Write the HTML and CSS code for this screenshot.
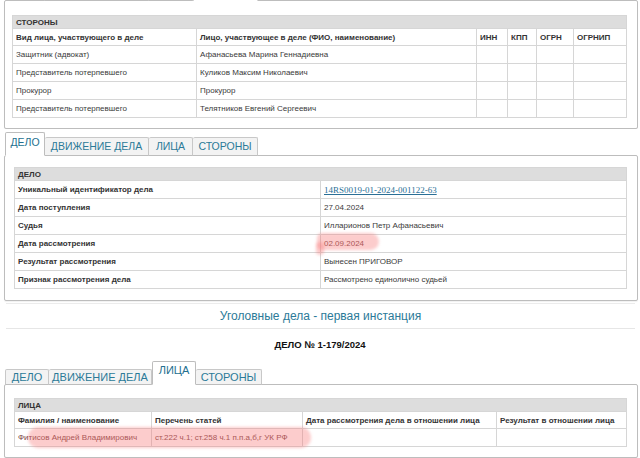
FILE: index.html
```html
<!DOCTYPE html>
<html lang="ru">
<head>
<meta charset="utf-8">
<title>Уголовные дела</title>
<link rel="stylesheet" href="styles.css">
</head>
<body>
<div class="clip">
  <div class="widget">
    <div class="tabs">
      <div class="tab t-delo"></div>
      <div class="tab t-move"></div>
      <div class="tab t-lica"></div>
      <div class="tab t-stor active"></div>
    </div>
    <div class="panel p1">
      <table class="grid">
        <colgroup><col class="c1"><col class="c2"><col class="c3"><col class="c4"><col class="c5"><col class="c6"></colgroup>
        <tr class="title"><td colspan="6">СТОРОНЫ</td></tr>
        <tr class="head"><td>Вид лица, участвующего в деле</td><td>Лицо, участвующее в деле (ФИО, наименование)</td><td>ИНН</td><td>КПП</td><td>ОГРН</td><td>ОГРНИП</td></tr>
        <tr><td>Защитник (адвокат)</td><td>Афанасьева Марина Геннадиевна</td><td></td><td></td><td></td><td></td></tr>
        <tr><td>Представитель потерпевшего</td><td>Куликов Максим Николаевич</td><td></td><td></td><td></td><td></td></tr>
        <tr><td>Прокурор</td><td>Прокурор</td><td></td><td></td><td></td><td></td></tr>
        <tr><td>Представитель потерпевшего</td><td>Телятников Евгений Сергеевич</td><td></td><td></td><td></td><td></td></tr>
      </table>
    </div>
  </div>
</div>

<div class="widget w2">
  <div class="tabs">
    <div class="tab t-delo active">ДЕЛО</div>
    <div class="tab t-move">ДВИЖЕНИЕ ДЕЛА</div>
    <div class="tab t-lica">ЛИЦА</div>
    <div class="tab t-stor">СТОРОНЫ</div>
  </div>
  <div class="panel p2">
    <table class="grid">
      <colgroup><col class="k1"><col class="k2"></colgroup>
      <tr class="title"><td colspan="2">ДЕЛО</td></tr>
      <tr><td class="k">Уникальный идентификатор дела</td><td><a class="uid" href="#">14RS0019-01-2024-001122-63</a></td></tr>
      <tr><td class="k">Дата поступления</td><td>27.04.2024</td></tr>
      <tr><td class="k">Судья</td><td>Илларионов Петр Афанасьевич</td></tr>
      <tr><td class="k">Дата рассмотрения</td><td><span class="red">02.09.2024</span></td></tr>
      <tr><td class="k">Результат рассмотрения</td><td>Вынесен ПРИГОВОР</td></tr>
      <tr><td class="k">Признак рассмотрения дела</td><td>Рассмотрено единолично судьей</td></tr>
    </table>
    <span class="mark m1"></span>
    <span class="mark m1b"></span>
  </div>
</div>

<div class="heading">Уголовные дела - первая инстанция</div>
<div class="caseno">ДЕЛО № 1-179/2024</div>

<div class="widget w3">
  <div class="tabs">
    <div class="tab t-delo">ДЕЛО</div>
    <div class="tab t-move">ДВИЖЕНИЕ ДЕЛА</div>
    <div class="tab t-lica active">ЛИЦА</div>
    <div class="tab t-stor">СТОРОНЫ</div>
  </div>
  <div class="panel p3">
    <table class="grid">
      <colgroup><col class="d1"><col class="d2"><col class="d3"><col class="d4"></colgroup>
      <tr class="title"><td colspan="4">ЛИЦА</td></tr>
      <tr class="head"><td>Фамилия / наименование</td><td>Перечень статей</td><td>Дата рассмотрения дела в отношении лица</td><td>Результат в отношении лица</td></tr>
      <tr><td><span class="red">Фитисов Андрей Владимирович</span></td><td><span class="red">ст.222 ч.1; ст.258 ч.1 п.п.а,б,г УК РФ</span></td><td></td><td></td></tr>
    </table>
    <span class="mark m2"></span>
  </div>
</div>
</body>
</html>
```

FILE: styles.css
```css
html, body {
  margin: 0;
  padding: 0;
  background: #ffffff;
}
body {
  width: 640px;
  height: 458px;
  overflow: hidden;
  font-family: "Liberation Sans", Arial, sans-serif;
  color: #333333;
}

/* clipped top widget: only its lower part is visible */
.clip {
  height: 129px;
  overflow: hidden;
  display: flex;
  flex-direction: column;
  justify-content: flex-end;
}

.widget {
  margin-left: 4px;
  width: 634px;
}

.tabs {
  display: flex;
  align-items: flex-end;
  padding-left: 1px;
  position: relative;
  z-index: 1;
  margin-bottom: -1px;
}
.tab {
  box-sizing: border-box;
  height: 19px;
  border: 1px solid #c8c8c8;
  border-bottom: 1px solid #bdbdbd;
  border-left: none;
  background: #f3f3f3;
  color: #2b7a98;
  font-size: 10.5px;
  line-height: 17px;
  text-align: center;
  border-radius: 2px 2px 0 0;
}
.tab:first-child { border-left: 1px solid #c8c8c8; }
.tab.active {
  height: 24px;
  background: #ffffff;
  border: 1px solid #bdbdbd;
  border-bottom-color: #ffffff;
  line-height: 18px;
  color: #23708f;
}
.t-delo { width: 40px; }
.t-move { width: 104px; }
.t-lica { width: 44px; }
.t-stor { width: 65px; }

.panel {
  position: relative;
  border: 1px solid #bdbdbd;
  border-radius: 2px;
  background: #ffffff;
  box-shadow: 0 1px 1px rgba(0,0,0,0.06);
  padding: 11px 10px 10px 7px;
}
.p1 { padding: 14px 10px 10px 7px; }

.grid {
  width: 614px;
  border-collapse: collapse;
  font-size: 8px;
  table-layout: fixed;
}
.grid td {
  border: 1px solid #d6d6d6;
  padding: 0 2px 0 3px;
  height: 17px;
  white-space: nowrap;
  overflow: hidden;
  color: #3a3a3a;
  vertical-align: middle;
}
.grid tr.title td {
  background: #dddddd;
  font-weight: bold;
  height: 12px;
  color: #333;
}
.grid tr.head td {
  font-weight: bold;
  color: #333;
  height: 16px;
}

/* table 1 columns */
.c1 { width: 184px; }
.c2 { width: 280px; }
.c3 { width: 31px; }
.c4 { width: 29px; }
.c5 { width: 37px; }
.c6 { width: 53px; }

/* widget 2 */
.w2 { margin-top: 3px; }
.p2 { padding: 11px 10px 11px 9px; }
.p2 .grid { width: 612px; }
.k1 { width: 306px; }
.k2 { width: 306px; }
.p2 .grid td.k { font-weight: bold; color: #333; }
.uid {
  font-family: "Liberation Serif", "Times New Roman", serif;
  font-size: 9px;
  color: #2a6f96;
  text-decoration: underline;
}
.red { color: #7a4444; }

.mark {
  position: absolute;
  background: rgba(246, 120, 120, 0.38);
  border-radius: 10px;
  filter: blur(1.6px);
  pointer-events: none;
  z-index: 2;
}
.m1 { left: 312px; top: 77px; width: 62px; height: 17px; border-radius: 6px 10px 10px 6px; }
.m1b { left: 311px; top: 86px; width: 8px; height: 13px; border-radius: 5px; }

/* heading */
.heading {
  margin: 2px 5px 0 6px;
  border-top: 1px solid #ececec;
  border-bottom: 1px solid #e6e6e6;
  height: 24px;
  line-height: 24px;
  text-align: center;
  font-size: 12px;
  color: #2b7a98;
}
.caseno {
  height: 32px;
  line-height: 32px;
  text-align: center;
  font-size: 9.5px;
  font-weight: bold;
  color: #111;
}

/* widget 3 */
.w3 .tab { height: 16px; line-height: 15px; font-size: 11px; }
.w3 .tab.active { height: 24px; line-height: 17px; }
.w3 .t-delo { width: 44px; }
.w3 .t-move { width: 103px; }
.w3 .t-lica { width: 44px; }
.w3 .t-stor { width: 66px; }
.p3 { padding: 13px 10px 10px 9px; }
.p3 .grid { width: 612px; }
.d1 { width: 137px; }
.d2 { width: 151px; }
.d3 { width: 194px; }
.d4 { width: 130px; }
.m2 { left: 23px; top: 42px; width: 283px; height: 21px; border-radius: 10px; }
```
